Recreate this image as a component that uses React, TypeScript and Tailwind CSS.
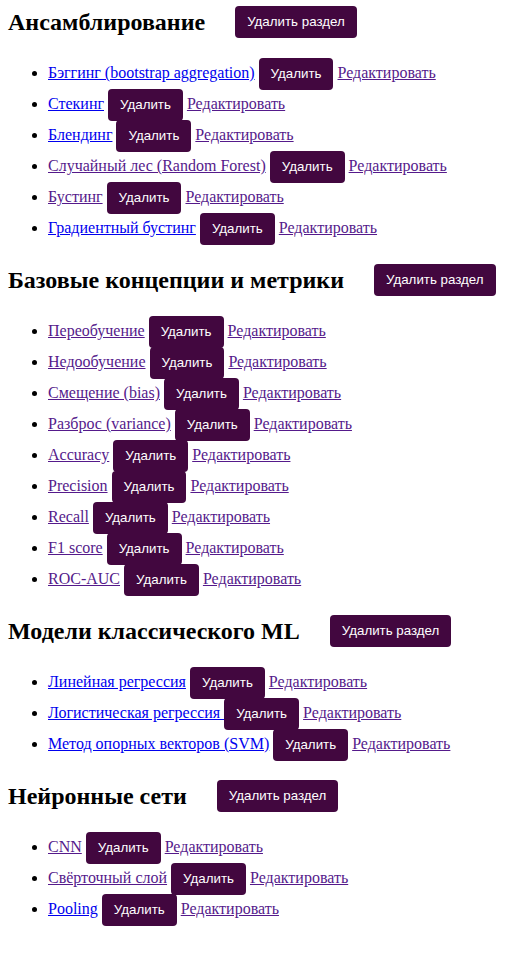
import React from "react";

type Topic = { title: string; visited?: boolean };
type Section = { title: string; topics: Topic[] };

const sections: Section[] = [
  {
    title: "Ансамблирование",
    topics: [
      { title: "Бэггинг (bootstrap aggregation)" },
      { title: "Стекинг" },
      { title: "Блендинг" },
      { title: "Случайный лес (Random Forest)", visited: true },
      { title: "Бустинг", visited: true },
      { title: "Градиентный бустинг" },
    ],
  },
  {
    title: "Базовые концепции и метрики",
    topics: [
      { title: "Переобучение", visited: true },
      { title: "Недообучение", visited: true },
      { title: "Смещение (bias)", visited: true },
      { title: "Разброс (variance)", visited: true },
      { title: "Accuracy", visited: true },
      { title: "Precision", visited: true },
      { title: "Recall", visited: true },
      { title: "F1 score", visited: true },
      { title: "ROC-AUC", visited: true },
    ],
  },
  {
    title: "Модели классического ML",
    topics: [
      { title: "Линейная регрессия" },
      { title: "Логистическая регрессия " },
      { title: "Метод опорных векторов (SVM)" },
    ],
  },
  {
    title: "Нейронные сети",
    topics: [
      { title: "CNN", visited: true },
      { title: "Свёрточный слой", visited: true },
      { title: "Pooling" },
    ],
  },
];

const btn =
  "inline-block rounded bg-[#42073f] px-3 py-2 font-['Liberation_Sans',Arial,sans-serif] text-[13.333px] leading-[16px] text-white";

const App = () => {
  return (
    <div className="min-h-screen bg-white px-2 pt-[6px] font-['Liberation_Serif','Times_New_Roman',serif] text-base leading-[normal] text-black">
      {sections.map((section) => (
        <div key={section.title}>
          <div className="flex h-8 items-center gap-[30px]">
            <h2 className="text-2xl font-bold">{section.title}</h2>
            <button className={btn}>Удалить раздел</button>
          </div>
          <ul className="mt-[19px] mb-[21px] list-disc pl-10">
            {section.topics.map((topic) => (
              <li key={topic.title} className="h-[31px] leading-[31px]">
                <a
                  href="#"
                  className={
                    topic.visited
                      ? "text-[#551a8b] underline"
                      : "text-[#0000ee] underline"
                  }
                >
                  {topic.title}
                </a>{" "}
                <button className={btn + " align-middle"}>Удалить</button>{" "}
                <a href="#" className="text-[#551a8b] underline">
                  Редактировать
                </a>
              </li>
            ))}
          </ul>
        </div>
      ))}
    </div>
  );
};

export default App;
